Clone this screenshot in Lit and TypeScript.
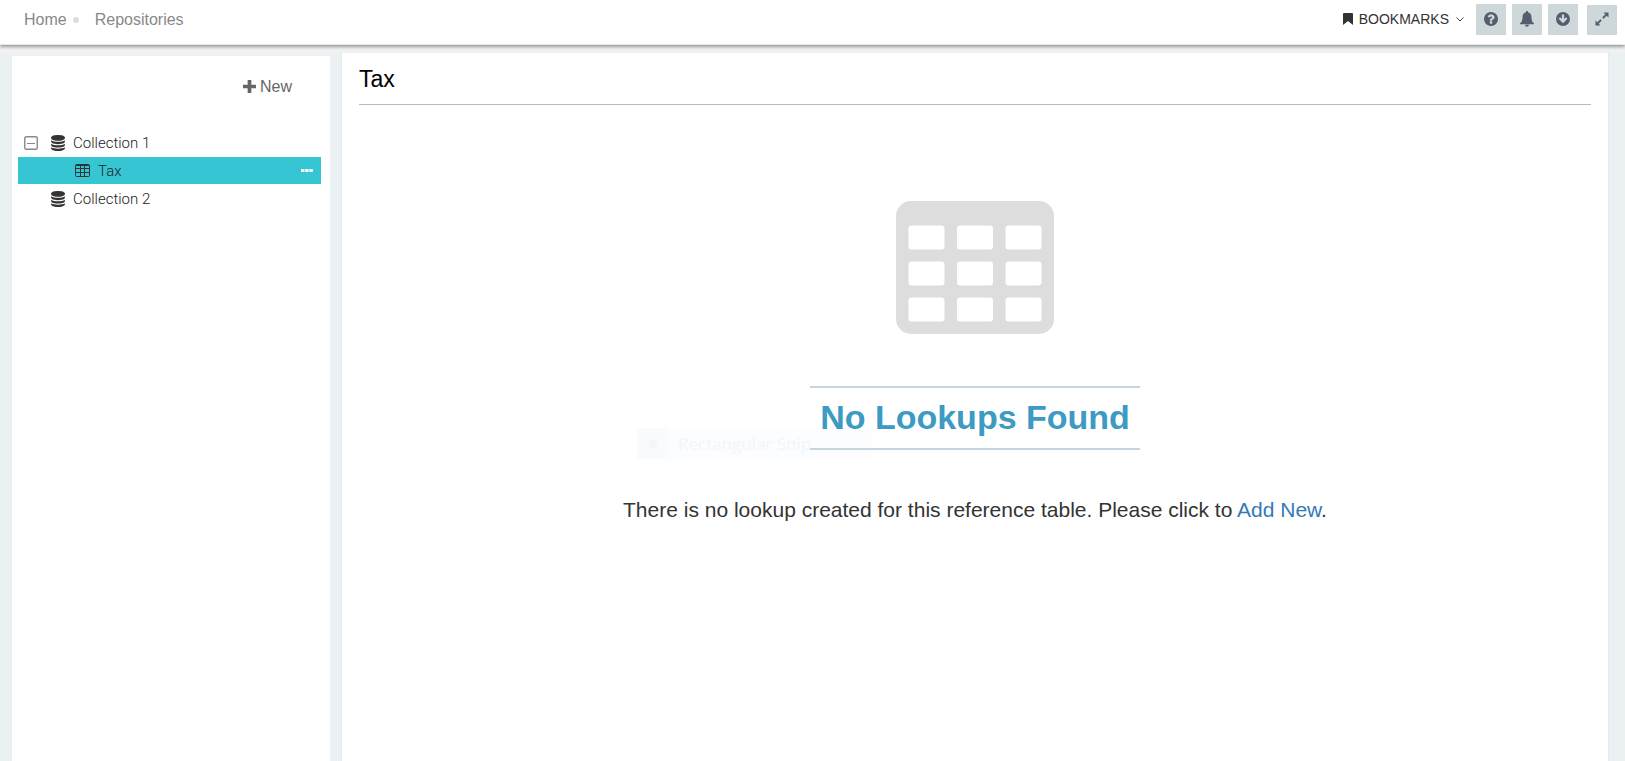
import { LitElement, html, css, svg } from "lit";
import { customElement, state } from "lit/decorators.js";

const databaseIcon = html`<svg class="db" viewBox="0 0 1536 1792" aria-hidden="true">
  <path d="M768 768q237 0 443-43t325-127v170q0 69-103 128t-280 93.5-385 34.5-385-34.5-280-93.5-103-128v-170q119 84 325 127t443 43zm0 768q237 0 443-43t325-127v170q0 69-103 128t-280 93.5-385 34.5-385-34.5-280-93.5-103-128v-170q119 84 325 127t443 43zm0-384q237 0 443-43t325-127v170q0 69-103 128t-280 93.5-385 34.5-385-34.5-280-93.5-103-128v-170q119 84 325 127t443 43zm0-1152q208 0 385 34.5t280 93.5 103 128v128q0 69-103 128t-280 93.5-385 34.5-385-34.5-280-93.5-103-128v-128q0-69 103-128t280-93.5 385-34.5z"/>
</svg>`;

const tableIcon = (cls: string) => html`<svg class=${cls} viewBox="0 0 158 133" aria-hidden="true">
  <rect width="158" height="133" rx="15"/>
  ${[12.5, 61, 109.5].map((x) =>
    [24.5, 60.5, 96.5].map((y) => svg`<rect class="cell" x=${x} y=${y} width="36" height="24" rx="3"/>`)
  )}
</svg>`;

@customElement("top-bar")
export class TopBar extends LitElement {
  static styles = css`
    :host {
      display: block;
      position: relative;
      z-index: 1;
    }
    .bar {
      display: flex;
      justify-content: space-between;
      align-items: flex-start;
      height: 45px;
      padding: 0 8px 0 24px;
      box-sizing: border-box;
      background: #fff;
      border-bottom: 1px solid #e3e9ed;
      box-shadow: 0 2px 3px #9a9da0;
    }
    .crumbs {
      display: flex;
      align-items: center;
      height: 39px;
    }
    .crumbs a {
      color: #888;
      font-size: 16px;
      line-height: 20px;
      text-decoration: none;
    }
    .dot {
      width: 6px;
      height: 6px;
      margin: 0 16px 0 6px;
      border-radius: 50%;
      background: #ddd;
    }
    .tools {
      display: flex;
      align-items: flex-start;
      gap: 6px;
      padding-top: 4px;
    }
    button {
      border: 0;
      padding: 0;
      font: inherit;
      cursor: pointer;
    }
    .bookmarks {
      display: flex;
      align-items: center;
      height: 30px;
      margin-right: 6px;
      background: none;
      color: #333;
      font-size: 14px;
    }
    .flag {
      width: 10px;
      height: 12px;
      margin-right: 6px;
      fill: #333;
    }
    .chevron {
      width: 8px;
      height: 8px;
      margin-left: 7px;
      fill: none;
      stroke: #444;
    }
    .square {
      display: flex;
      align-items: center;
      justify-content: center;
      width: 30px;
      height: 31px;
      background: #ced8db;
    }
    .square svg {
      width: 14px;
      height: 16px;
      margin-bottom: 2px;
      fill: #555e6e;
    }
    .expand {
      height: 30px;
      margin: 1px 0 0 3px;
    }
  `;

  render() {
    return html`<header class="bar">
      <nav class="crumbs" aria-label="Breadcrumb">
        <a href="#home">Home</a><span class="dot"></span><a href="#repositories">Repositories</a>
      </nav>
      <div class="tools">
        <button class="bookmarks">
          <svg class="flag" viewBox="0 0 10 12"><path d="M0 1Q0 0 1 0H9Q10 0 10 1V12L5 8L0 12Z"/></svg>
          BOOKMARKS
          <svg class="chevron" viewBox="0 0 8 8"><path d="M.5 2.5L4 6L7.5 2.5"/></svg>
        </button>
        <button class="square" aria-label="Help">
          <svg viewBox="128 128 1536 1536"><path d="M1024 1376v-192q0-14-9-23t-23-9h-192q-14 0-23 9t-9 23v192q0 14 9 23t23 9h192q14 0 23-9t9-23zm256-672q0-88-55.5-163t-138.5-116-170-41q-243 0-371 213-15 24 8 42l132 100q7 6 19 6 16 0 25-12 53-68 86-92 34-24 86-24 48 0 85.5 26t37.5 59q0 38-20 61t-68 45q-63 28-115.5 86.5t-52.5 125.5v36q0 14 9 23t23 9h192q14 0 23-9t9-23q0-19 21.5-49.5t54.5-49.5q32-18 49-28.5t46-35 44.5-48 28-60.5 12.5-81zm384 192q0 209-103 385.5t-279.5 279.5-385.5 103-385.5-103-279.5-279.5-103-385.5 103-385.5 279.5-279.5 385.5-103 385.5 103 279.5 279.5 103 385.5z"/></svg>
        </button>
        <button class="square" aria-label="Notifications">
          <svg viewBox="1 1 14 16"><path d="M8 1c.7 0 1.100.4 1.100 1.200C11.500 2.800 12.500 4.800 12.500 7.200C12.500 10.600 13.500 12.300 15 13.300V14.300H1V13.300C2.500 12.300 3.500 10.600 3.500 7.200C3.500 4.800 4.500 2.800 6.900 2.200C6.900 1.400 7.300 1 8 1ZM6 14.800H10A2 2 0 0 1 6 14.800Z"/></svg>
        </button>
        <button class="square" aria-label="Downloads">
          <svg viewBox="1 1 14 14"><path fill-rule="evenodd" d="M8 1a7 7 0 1 1 0 14a7 7 0 0 1 0-14ZM6.900 3.600V8L5.100 6.300L3.600 7.800L8 12.300L12.400 7.800L10.900 6.300L9.100 8V3.600Z"/></svg>
        </button>
        <button class="square expand" aria-label="Full screen">
          <svg viewBox="1 1 14 14"><path d="M9.500 1.500H14.500V6.500L12.700 4.700L9.600 7.800L8.200 6.400L11.300 3.300ZM6.500 14.500H1.500V9.500L3.300 11.300L6.400 8.200L7.800 9.600L4.700 12.700Z"/></svg>
        </button>
      </div>
    </header>`;
  }
}

@customElement("collection-tree")
export class CollectionTree extends LitElement {
  @state() private open = true;

  static styles = css`
    :host {
      display: block;
      background: #fff;
    }
    button {
      border: 0;
      padding: 0;
      background: none;
      font: inherit;
      color: inherit;
      cursor: pointer;
    }
    .new {
      display: flex;
      align-items: center;
      gap: 4px;
      margin: 21px 38px 0 auto;
      color: #666;
      font-size: 16px;
      line-height: 20px;
    }
    .plus {
      width: 13px;
      height: 13px;
      margin-bottom: 2px;
      fill: #666;
    }
    .tree {
      margin: 32px 9px 0 6px;
      padding: 0;
      list-style: none;
      color: #222;
      font-family: "Roboto", "Open Sans", sans-serif;
      font-size: 15px;
      font-weight: 300;
    }
    .row {
      display: flex;
      align-items: center;
      height: 28px;
      padding-left: 6px;
    }
    .toggle,
    .spacer {
      display: block;
      width: 14px;
      height: 14px;
      margin-right: 13px;
      flex: none;
    }
    .toggle svg {
      display: block;
      width: 14px;
      height: 14px;
      fill: none;
      stroke: #888;
    }
    .db {
      width: 14px;
      height: 16px;
      margin-right: 8px;
      fill: #333;
    }
    .selected {
      height: 27px;
      margin-bottom: 1px;
      padding: 0 8px 0 57px;
      background: #36c6d3;
    }
    .grid {
      width: 15px;
      height: 13px;
      margin-right: 8px;
      fill: none;
      stroke: #333;
    }
    .name {
      flex: 1;
    }
    .more {
      width: 12px;
      height: 8px;
    }
    .more svg {
      display: block;
      width: 12px;
      height: 4px;
      fill: #fff;
    }
  `;

  render() {
    return html`
      <button class="new">
        <svg class="plus" viewBox="0 0 12 12"><path d="M4.300 0H7.700V4.300H12V7.700H7.700V12H4.300V7.700H0V4.300H4.300Z"/></svg>New
      </button>
      <ul class="tree">
        <li class="row">
          <button class="toggle" aria-label="Toggle Collection 1" aria-expanded=${this.open} @click=${() => (this.open = !this.open)}>
            <svg viewBox="0 0 14 14">
              <rect x=".75" y=".75" width="12.500" height="12.500" rx="1.500" stroke-width="1.400"/>
              <path d=${this.open ? "M3 7.500H11" : "M3 7.500H11M7 3.500V11.500"}/>
            </svg>
          </button>
          ${databaseIcon}<span class="name">Collection 1</span>
        </li>
        ${this.open
          ? html`<li class="row selected">
              <svg class="grid" viewBox="0 0 15 13">
                <rect x=".5" y=".5" width="14" height="12" rx="1"/>
                <path d="M1 1.500H14M1 4.500H14M1 8.500H14M5.500 1V12M9.500 1V12"/>
              </svg>
              <span class="name">Tax</span>
              <button class="more" aria-label="More actions">
                <svg viewBox="0 0 12 4"><path d="M0 0H3.400V3H0ZM4.200 0H7.600V3H4.200ZM8.400 0H11.800V3H8.400Z"/></svg>
              </button>
            </li>`
          : ""}
        <li class="row"><span class="spacer"></span>${databaseIcon}<span class="name">Collection 2</span></li>
      </ul>
    `;
  }
}

@customElement("lookup-panel")
export class LookupPanel extends LitElement {
  static styles = css`
    :host {
      display: block;
      padding: 0 17px;
      background: #fff;
      border-left: 1px solid #e3e9ee;
      border-right: 1px solid #e3e9ee;
    }
    .title {
      margin: 0;
      padding: 13px 0 11px;
      border-bottom: 1px solid #bbb;
      color: #000;
      font-size: 23px;
      font-weight: 400;
      line-height: 27px;
    }
    .empty {
      position: relative;
      display: flex;
      flex-direction: column;
      align-items: center;
      padding-top: 96px;
    }
    .picture {
      width: 158px;
      height: 133px;
      fill: #ddd;
    }
    .cell {
      fill: #fff;
    }
    .heading {
      position: relative;
      margin: 52px 0 0;
      padding: 9px 10px 11px;
      border: solid #c5d5e0;
      border-width: 2px 0;
      color: #3c9ac3;
      font-size: 34px;
      font-weight: 700;
      line-height: 40px;
    }
    .message {
      margin: 47px 0 0;
      color: #333;
      font-size: 21px;
      line-height: 26px;
    }
    .message a {
      color: #337ab7;
      text-decoration: none;
    }
    .ghost {
      position: absolute;
      top: 323px;
      right: calc(50% + 102px);
      display: flex;
      align-items: center;
      width: 236px;
      height: 31px;
      background: #fcfdff;
      color: #f4f5f7;
      font-family: "Open Sans", sans-serif;
      font-size: 17px;
    }
    .ghost-icon {
      display: flex;
      align-items: center;
      justify-content: center;
      width: 31px;
      height: 31px;
      margin-right: 10px;
      background: #f9fcff;
    }
    .ghost-dot {
      width: 10px;
      height: 10px;
      border-radius: 50%;
      background: #f6f6f7;
    }
  `;

  render() {
    return html`
      <h1 class="title">Tax</h1>
      <section class="empty">
        <div class="ghost"><span class="ghost-icon"><span class="ghost-dot"></span></span>Rectangular Snip</div>
        ${tableIcon("picture")}
        <h2 class="heading">No Lookups Found</h2>
        <p class="message">
          There is no lookup created for this reference table. Please click to <a href="#add">Add New</a>.
        </p>
      </section>
    `;
  }
}

@customElement("app-root")
export class AppRoot extends LitElement {
  static styles = css`
    :host {
      display: flex;
      flex-direction: column;
      min-height: 100vh;
      background: #ebf0f3;
      font-family: "Liberation Sans", Arial, sans-serif;
    }
    .strip {
      height: 8px;
      background: #f1f1f1;
    }
    .content {
      display: grid;
      grid-template-columns: 318px 1fr;
      gap: 11px;
      flex: 1;
      padding: 0 16px 0 12px;
    }
    .side {
      margin-top: 3px;
    }
  `;

  render() {
    return html`
      <top-bar></top-bar>
      <div class="strip"></div>
      <main class="content">
        <collection-tree class="side"></collection-tree>
        <lookup-panel></lookup-panel>
      </main>
    `;
  }
}
